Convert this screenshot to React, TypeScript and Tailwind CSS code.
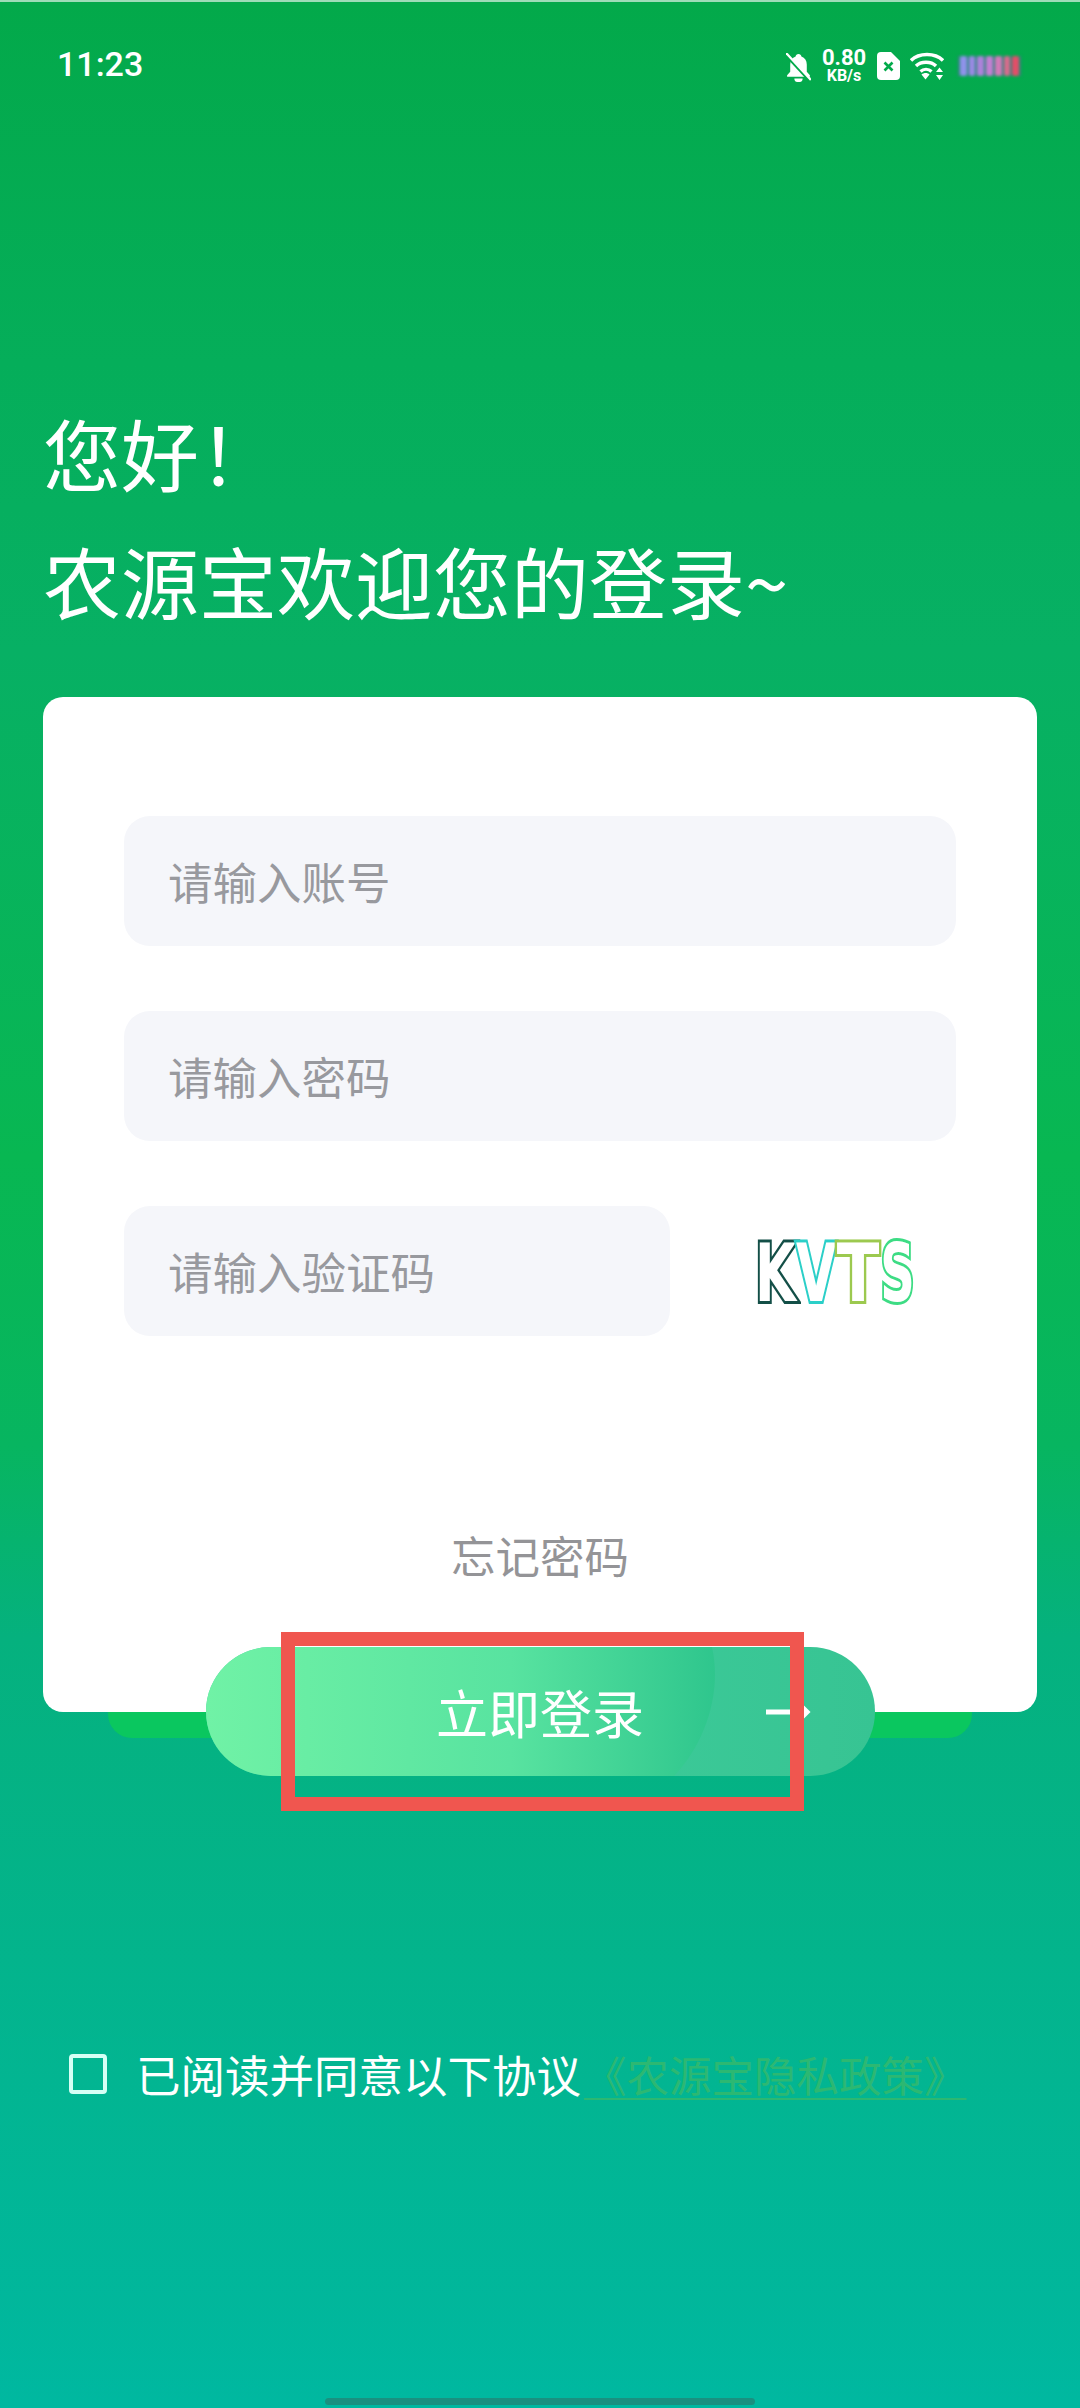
const barColors = ["bg-[#8f93ea]", "bg-[#9a8ae4]", "bg-[#ad82da]", "bg-[#c47fd2]", "bg-[#d27ab8]", "bg-[#d66c8c]", "bg-[#e24f68]"];

const fields = ["请输入账号", "请输入密码"];

function StatusBar() {
    return (
        <div className="flex h-[128px] items-start justify-between pl-[57px] pr-[59px] pt-[45px]">
            <span className="font-['Roboto',sans-serif] text-[34px] font-medium leading-[34px] text-white">11:23</span>
            <div className="flex items-center gap-[10px]">
                <svg width="25" height="29" viewBox="0 0 24 28" className="mt-[3px]">
                    <path d="M12 1c-1.600 0-2.600 1-2.800 2.400C5.800 4.600 4 7.600 4 11v7l-3 3.600V23h22v-1.400L20 18v-7c0-3.400-1.800-6.400-5.200-7.600C14.600 2 13.600 1 12 1z" fill="#fff" />
                    <path d="M8 24.500a4 3.600 0 0 0 8 0z" fill="#fff" />
                    <path d="M0 2l24 26" stroke="#02aa4a" strokeWidth="3" />
                    <path d="M0 0l24 26" stroke="#fff" strokeWidth="2.200" />
                </svg>
                <div className="flex w-[46px] flex-col items-center font-['Roboto',sans-serif] font-bold text-white">
                    <span className="text-[22px] leading-[21px]">0.80</span>
                    <span className="text-[16px] leading-[16px]">KB/s</span>
                </div>
                <svg width="23" height="28" viewBox="0 0 23 28">
                    <path d="M4 0h10l9 9v15a4 4 0 0 1-4 4H4a4 4 0 0 1-4-4V4a4 4 0 0 1 4-4z" fill="#fff" />
                    <path d="M7.500 10.500l8 8M15.500 10.500l-8 8" stroke="#02aa4a" strokeWidth="2.600" />
                </svg>
                <svg width="34" height="28" viewBox="0 0 34 28">
                    <path d="M1 8.500C9 .5 25 .5 33 8.500" fill="none" stroke="#fff" strokeWidth="3.400" />
                    <path d="M6 14c5-5 15-5 20 0" fill="none" stroke="#fff" strokeWidth="3.400" />
                    <path d="M10.500 19.500c3-3 8-3 11 0" fill="none" stroke="#fff" strokeWidth="3.200" />
                    <path d="M11.500 22.500c2.500-2 6-2 8 0L15.500 27.500z" fill="#fff" />
                    <path d="M29.500 15.500l3.500 4.500h-7zM29.500 28l3.500-5h-7z" fill="#fff" />
                </svg>
                <div className="ml-[4px] flex h-[20px] w-[63px] gap-[2px] bg-[#5a5fb0]/50 px-[2px] blur-[1.5px]">
                    {barColors.map((c) => (
                        <div key={c} className={`flex-1 rounded-[2px] ${c}`} />
                    ))}
                </div>
            </div>
        </div>
    );
}

function Captcha() {
    return (
        <div className="mr-[41px] flex h-[130px] w-[160px] items-center justify-center pt-[5px] font-['DejaVu_Sans',sans-serif] text-[80px] font-bold leading-none text-white">
            <span className="inline-flex w-[41px] scale-x-[0.66] justify-center [-webkit-text-stroke:6px_#134f47] [paint-order:stroke_fill]">K</span>
            <span className="inline-flex w-[40px] scale-x-[0.65] justify-center [-webkit-text-stroke:6px_#2bcfc8] [paint-order:stroke_fill]">V</span>
            <span className="inline-flex w-[44px] scale-x-[0.78] justify-center [-webkit-text-stroke:6px_#9cc94f] [paint-order:stroke_fill]">T</span>
            <span className="inline-flex w-[35px] scale-x-[0.6] justify-center [-webkit-text-stroke:6px_#3ddc84] [paint-order:stroke_fill]">S</span>
        </div>
    );
}

function LoginButton() {
    return (
        <div className="relative z-20 mx-auto -mt-[91px] h-[129px] w-[669px] overflow-hidden rounded-full bg-gradient-to-r from-[#44d3a0] to-[#37c493]">
            <svg width="669" height="129" viewBox="0 0 669 129" className="absolute left-0 top-0">
                <defs>
                    <linearGradient id="pill" x1="0" x2="1" y1="0" y2="0">
                        <stop offset="0" stopColor="#70f2a6" />
                        <stop offset="0.6" stopColor="#58e3a0" />
                        <stop offset="1" stopColor="#2fc68d" />
                    </linearGradient>
                </defs>
                <path d="M0 0H506C516 45 500 95 468 129H0Z" fill="url(#pill)" />
            </svg>
            <span className="absolute inset-0 flex items-center justify-center font-['Noto_Sans_CJK_SC',sans-serif] text-[52px] leading-none text-white">立即登录</span>
            <svg width="48" height="24" viewBox="0 0 48 24" className="absolute left-[560px] top-[53px]">
                <path d="M0 12H40M32 3l9 9-9 9" fill="none" stroke="#fff" strokeWidth="5" />
            </svg>
        </div>
    );
}

export default function App() {
    return (
        <div className="relative flex h-[2408px] w-[1080px] flex-col overflow-hidden border-t-2 border-[#9edcb8] bg-[linear-gradient(180deg,#03a94a_0%,#05ae5a_15%,#07b064_27%,#08b752_48%,#07b560_60%,#05b17e_68%,#00b8a0_100%)] font-['Noto_Sans_CJK_SC',sans-serif]">
            <StatusBar />
            <div className="mt-[258px] pl-[43px] text-[78px] leading-[128px] text-white">
                <div>您好！</div>
                <div>农源宝欢迎您的登录~</div>
            </div>
            <div className="relative z-10 mx-[43px] mt-[53px] flex h-[1015px] flex-col rounded-[20px] bg-white px-[81px] pt-[119px] text-[44.500px] leading-none">
                {fields.map((f) => (
                    <div key={f} className="mb-[65px] flex h-[130px] items-center rounded-[26px] bg-[#f5f6fa] pl-[44px] text-[#98999e]">
                        {f}
                    </div>
                ))}
                <div className="flex items-center justify-between">
                    <div className="flex h-[130px] w-[546px] items-center rounded-[26px] bg-[#f5f6fa] pl-[44px] text-[#98999e]">请输入验证码</div>
                    <Captcha />
                </div>
                <div className="mt-[197px] text-center text-[#949497]">忘记密码</div>
            </div>
            <div className="mx-[108px] h-[26px] rounded-b-[24px] bg-[#0ac75f]" />
            <LoginButton />
            <div className="mt-[276px] flex items-center pl-[69px] leading-none">
                <div className="h-[40px] w-[38px] rounded-[4px] border-[4px] border-[#d6fff5]" />
                <span className="ml-[29px] text-[44.500px] text-white">已阅读并同意以下协议</span>
                <span className="ml-[3px] text-[42.500px] text-[#2cb872] underline decoration-[2px] underline-offset-[6px]">《农源宝隐私政策》</span>
            </div>
            <div className="absolute left-[325px] top-[2396px] h-[7px] w-[430px] rounded-full bg-[#1a9080]" />
            <div className="absolute left-[281px] top-[1630px] z-30 h-[179px] w-[523px] border-[14px] border-[#f0564f]" />
        </div>
    );
}
